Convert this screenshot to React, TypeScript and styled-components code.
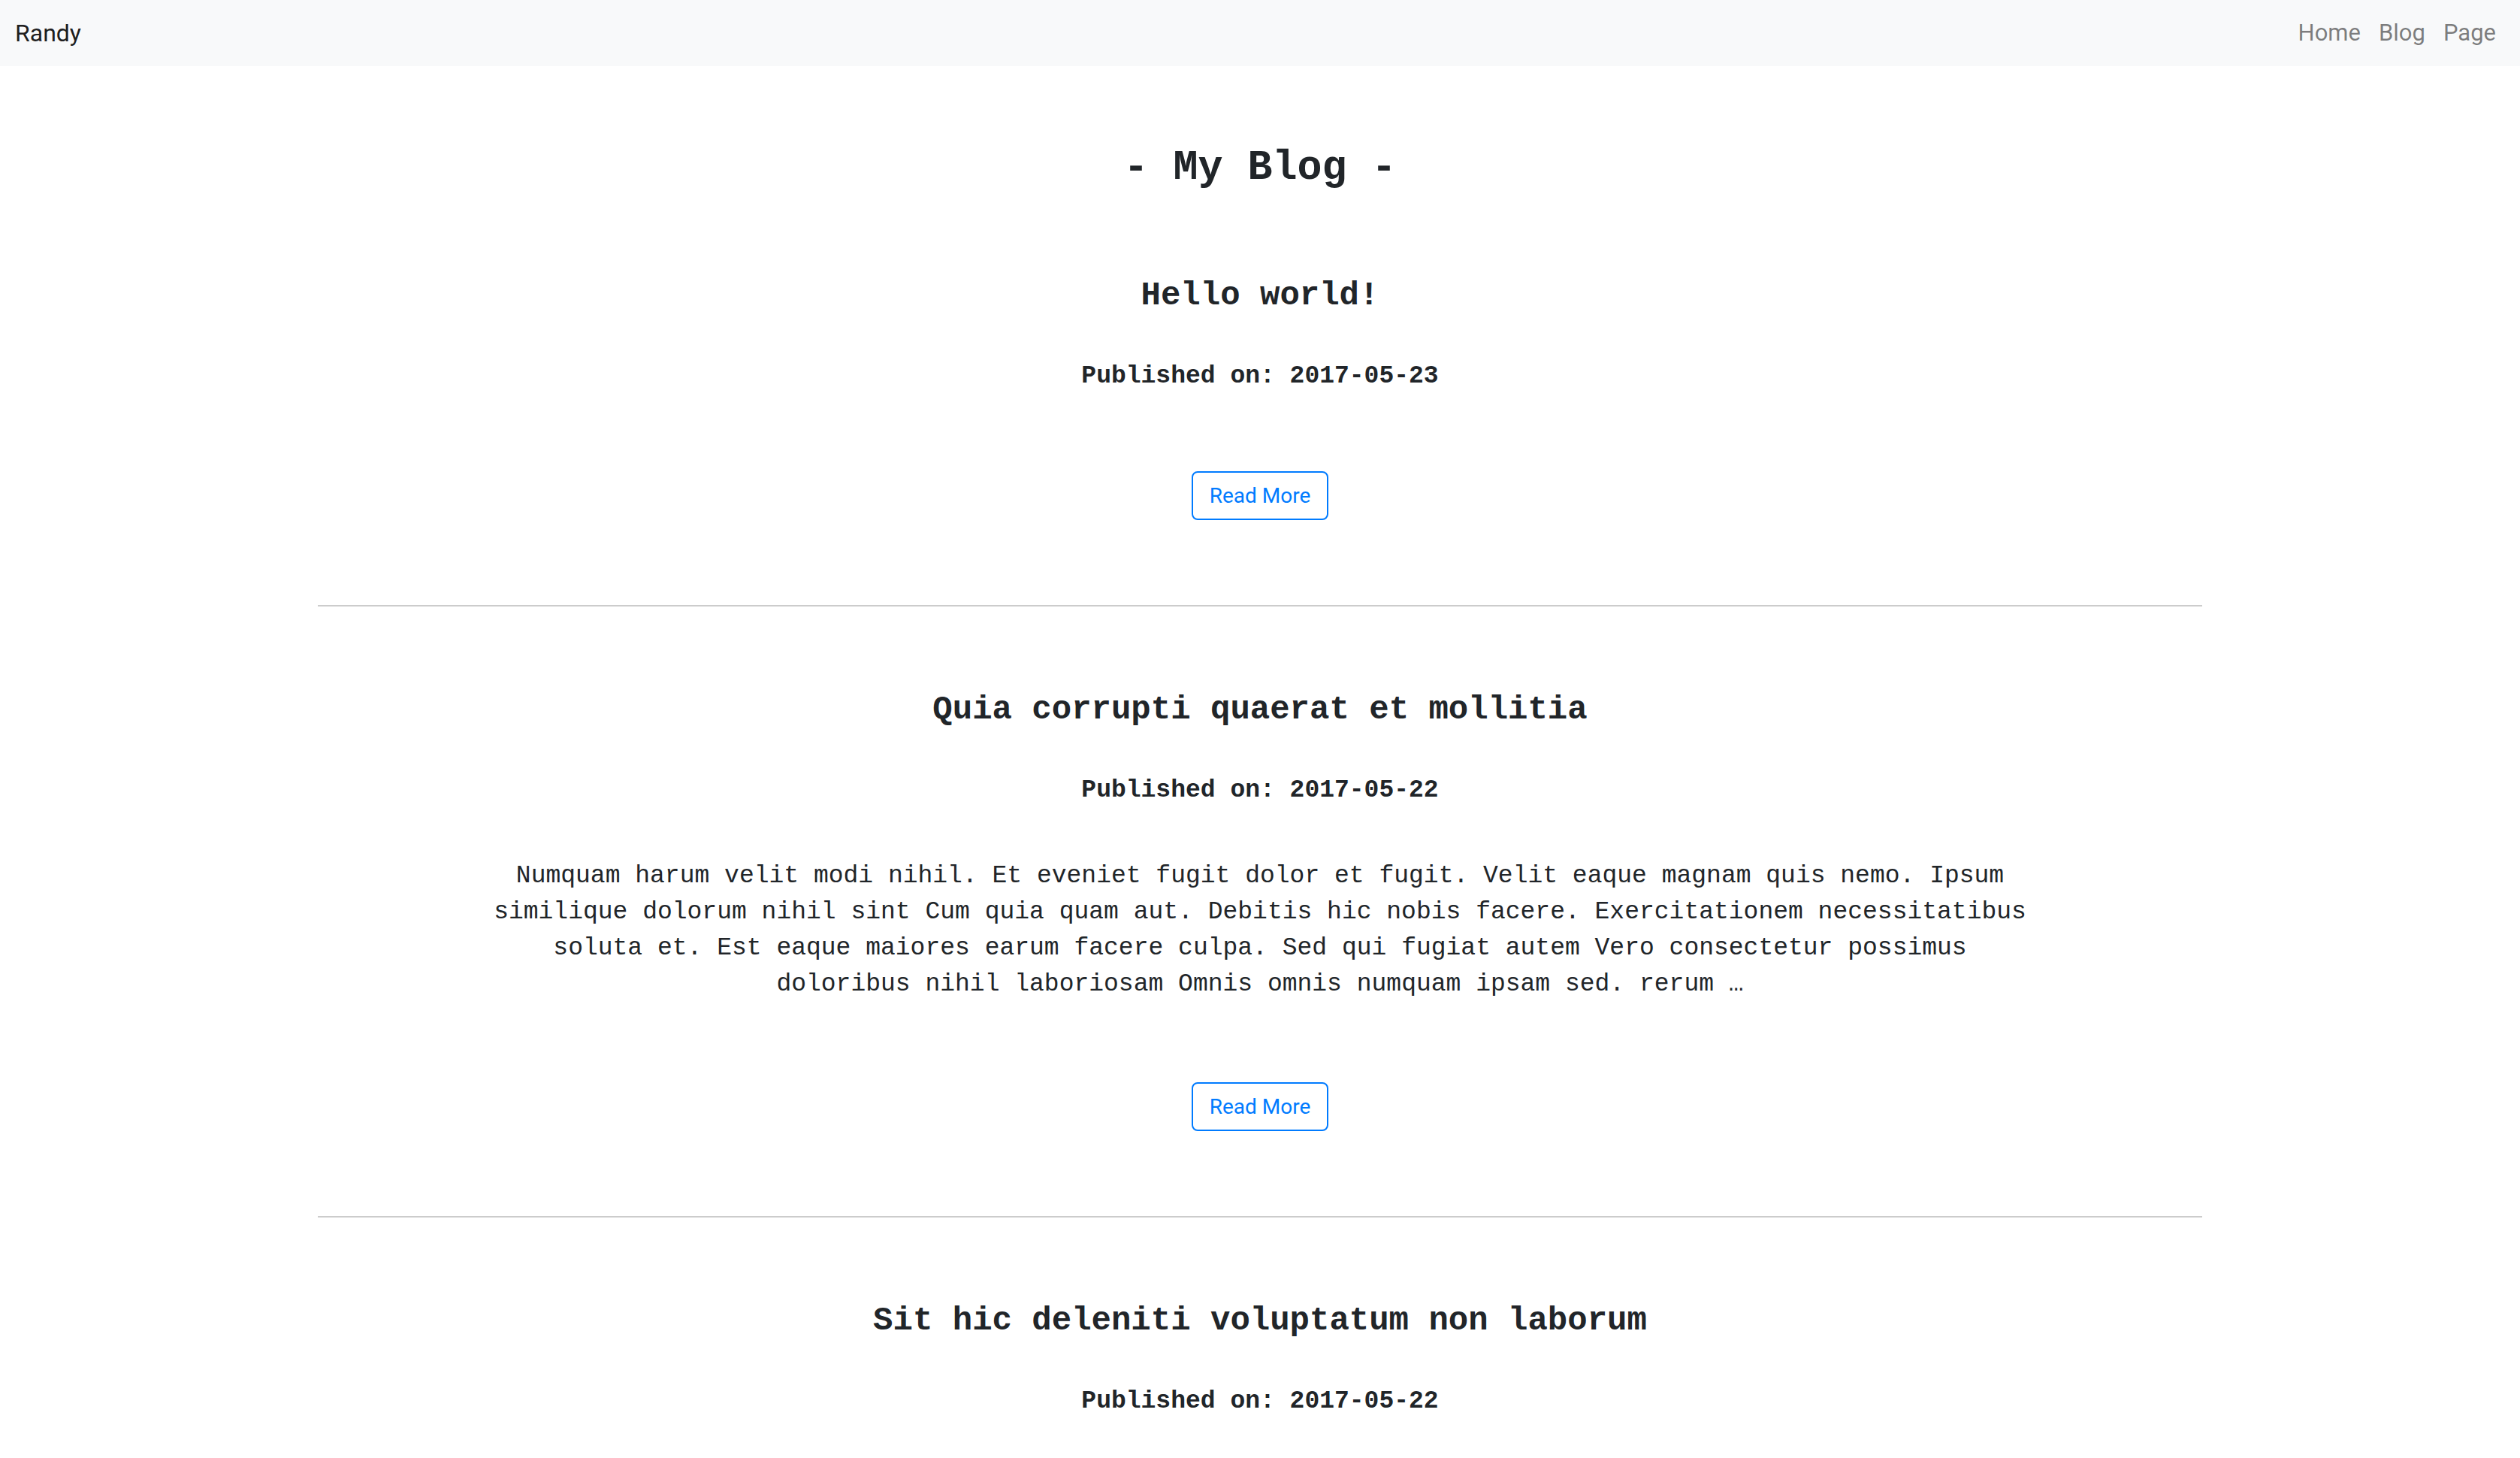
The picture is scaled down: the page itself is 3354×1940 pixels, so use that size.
import React from "react";
import styled, { createGlobalStyle } from "styled-components";

const GlobalStyle = createGlobalStyle`
  html, body {
    margin: 0;
    padding: 0;
    background: #ffffff;
  }
  body {
    font-family: "Liberation Mono", "Courier New", monospace;
    color: #212529;
  }
  * { box-sizing: border-box; }
`;

const NavBar = styled.nav`
  height: 88px;
  background: #f8f9fa;
  display: flex;
  align-items: center;
  justify-content: space-between;
  padding: 0 20px;
  font-family: Roboto, "Liberation Sans", Arial, sans-serif;
  font-size: 31px;
`;

const Brand = styled.a`
  color: rgba(0, 0, 0, 0.9);
  text-decoration: none;
  line-height: 44px;
  font-size: 32px;
`;

const NavLinks = styled.ul`
  display: flex;
  list-style: none;
  margin: 0;
  padding: 0;
`;

const NavLink = styled.a`
  display: block;
  padding: 0 12px;
  color: rgba(0, 0, 0, 0.5);
  text-decoration: none;
  line-height: 44px;
`;

const Main = styled.main`
  width: 2508px;
  margin: 0 auto;
  padding-top: 104px;
  text-align: center;
`;

const PageTitle = styled.h1`
  margin: 0;
  font-size: 55px;
  line-height: 64px;
  font-weight: 700;
`;

const Post = styled.article`
  display: flex;
  flex-direction: column;
  align-items: center;
  padding: 111px 0 113px;
`;

const PostTitle = styled.h2`
  margin: 0;
  font-size: 44px;
  line-height: 52px;
  font-weight: 700;
`;

const PublishedOn = styled.h5`
  margin: 62px 0 0;
  font-size: 33px;
  line-height: 40px;
  font-weight: 700;
`;

const Excerpt = styled.p`
  margin: 70px 0 0;
  max-width: 2060px;
  font-size: 33px;
  line-height: 48px;
  font-weight: 400;
`;

const ReadMore = styled.a`
  display: inline-block;
  margin-top: 106px;
  padding: 0 22px;
  height: 65px;
  line-height: 61px;
  border: 2px solid #007bff;
  border-radius: 8px;
  color: #007bff;
  font-family: Roboto, "Liberation Sans", Arial, sans-serif;
  font-size: 28px;
  text-decoration: none;
`;

const Divider = styled.hr`
  margin: 0;
  border: 0;
  border-top: 2px solid #cccccc;
`;

type PostData = { title: string; date: string; excerpt?: string };

const posts: PostData[] = [
  { title: "Hello world!", date: "2017-05-23" },
  {
    title: "Quia corrupti quaerat et mollitia",
    date: "2017-05-22",
    excerpt:
      "Numquam harum velit modi nihil. Et eveniet fugit dolor et fugit. Velit eaque magnam quis nemo. Ipsum similique dolorum nihil sint Cum quia quam aut. Debitis hic nobis facere. Exercitationem necessitatibus soluta et. Est eaque maiores earum facere culpa. Sed qui fugiat autem Vero consectetur possimus doloribus nihil laboriosam Omnis omnis numquam ipsam sed. rerum …",
  },
  { title: "Sit hic deleniti voluptatum non laborum", date: "2017-05-22" },
];

export default function App() {
  return (
    <>
      <GlobalStyle />
      <NavBar>
        <Brand href="#">Randy</Brand>
        <NavLinks>
          <li><NavLink href="#">Home</NavLink></li>
          <li><NavLink href="#">Blog</NavLink></li>
          <li><NavLink href="#">Page</NavLink></li>
        </NavLinks>
      </NavBar>
      <Main>
        <PageTitle>- My Blog -</PageTitle>
        {posts.map((p, i) => (
          <React.Fragment key={i}>
            <Post>
              <PostTitle>{p.title}</PostTitle>
              <PublishedOn>Published on: {p.date}</PublishedOn>
              {p.excerpt && <Excerpt>{p.excerpt}</Excerpt>}
              <ReadMore href="#">Read More</ReadMore>
            </Post>
            {i < posts.length - 1 && <Divider />}
          </React.Fragment>
        ))}
      </Main>
    </>
  );
}
